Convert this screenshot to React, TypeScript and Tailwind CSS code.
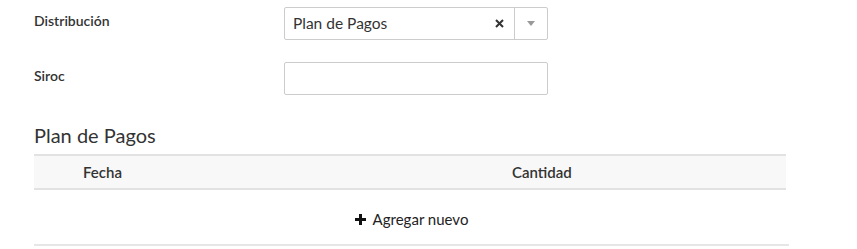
export default function App() {
  return (
    <div className="h-[249px] w-[857px] bg-white pl-[34px] pt-[7px] text-[#333] [font-family:Lato,'Noto_Sans',sans-serif]">
      {/* Distribución */}
      <div className="flex items-start">
        <label className="w-[250px] pt-[4px] text-[14px] leading-[20px] font-semibold text-[#333]">Distribución</label>
        <div className="flex h-[33px] w-[264px] items-center rounded-[2px] border border-[#ccc] bg-white">
          <span className="flex-1 pl-[8px] text-[15.5px] text-[#333]">Plan de Pagos</span>
          <span className="flex w-[30px] items-center justify-center text-[#333]">
            <svg width="9" height="9" viewBox="0 0 9 9">
              <path d="M1 1 L8 8 M8 1 L1 8" stroke="#333" strokeWidth="2" />
            </svg>
          </span>
          <span className="flex h-full w-[33px] items-center justify-center border-l border-[#ccc]">
            <svg width="8" height="5" viewBox="0 0 8 5">
              <path d="M0 0 L8 0 L4 5 Z" fill="#999" />
            </svg>
          </span>
        </div>
      </div>

      {/* Siroc */}
      <div className="mt-[22px] flex items-start">
        <label className="w-[250px] pt-[4px] text-[14px] leading-[20px] font-semibold text-[#333]">Siroc</label>
        <input
          type="text"
          className="h-[33px] w-[264px] rounded-[2px] border border-[#ccc] bg-white px-2 text-[14px] outline-none"
        />
      </div>

      {/* Plan de Pagos */}
      <h3 className="mt-[27px] text-[20px] leading-[26px] text-[#333]">Plan de Pagos</h3>

      <div className="mt-[6px] w-[755px]">
        <div className="flex h-[36px] w-[752px] items-center border-y-2 border-[#e2e2e2] bg-[#f8f8f8] text-[15px] font-semibold text-[#333]">
          <div className="w-[478px] pl-[49px]">Fecha</div>
          <div className="flex-1">Cantidad</div>
        </div>
        <div className="flex h-[56px] w-[755px] items-center justify-center border-b-2 border-[#e6e6e6] pt-[4px] text-[15px] text-[#222]">
          <button className="flex items-center gap-[7px]">
            <svg width="11" height="11" viewBox="0 0 11 11">
              <path d="M5.5 0 V11 M0 5.5 H11" stroke="#111" strokeWidth="3" />
            </svg>
            Agregar nuevo
          </button>
        </div>
      </div>
    </div>
  );
}
